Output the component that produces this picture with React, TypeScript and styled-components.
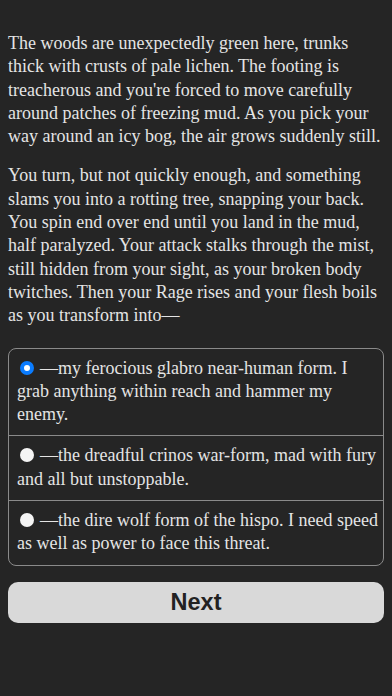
import { ReactElement, useState } from "react";
import styled, { createGlobalStyle } from "styled-components";

const GlobalStyle = createGlobalStyle`
  html, body {
    margin: 0;
    padding: 0;
    background: #252525;
  }
  body {
    font-family: "Liberation Serif", "DejaVu Serif", serif;
    -webkit-font-smoothing: antialiased;
  }
`;

const Screen = styled.div`
  width: 392px;
  min-height: 696px;
  box-sizing: border-box;
  padding: 32px 8px 0;
  background: #252525;
  color: #e4e4e4;
`;

const Passage = styled.p`
  margin: 0 0 16px;
  font-size: 18px;
  line-height: 23.3px;
`;

const Line = styled.span`
  white-space: nowrap;
`;

const Choices = styled.div`
  margin-top: 20px;
  border: 1px solid #8a8a8a;
  border-radius: 8px;
  overflow: hidden;
`;

const Choice = styled.label<{ $last?: boolean }>`
  display: block;
  padding: 8px 4px 9px 8px;
  font-size: 18px;
  line-height: 23.3px;
  border-bottom: ${(p) => (p.$last ? "none" : "1px solid #8a8a8a")};
  cursor: pointer;
`;

const Radio = styled.span<{ $checked: boolean }>`
  display: inline-block;
  width: 14px;
  height: 14px;
  margin: 0 6px 0 3px;
  border-radius: 50%;
  box-sizing: border-box;
  vertical-align: -1px;
  background: ${(p) => (p.$checked ? "#ffffff" : "#f4f4f4")};
  border: ${(p) => (p.$checked ? "4px solid #0a7cff" : "none")};
`;

const NextButton = styled.button`
  display: block;
  width: 100%;
  height: 41px;
  margin-top: 16px;
  border: none;
  border-radius: 10px;
  background: #d9d9d9;
  color: #222222;
  font-family: "Liberation Sans", Arial, sans-serif;
  font-weight: 700;
  font-size: 23.5px;
  cursor: pointer;
`;

// line breaks follow the original layout
const passages = [
  [
    "The woods are unexpectedly green here, trunks",
    "thick with crusts of pale lichen. The footing is",
    "treacherous and you're forced to move carefully",
    "around patches of freezing mud. As you pick your",
    "way around an icy bog, the air grows suddenly still.",
  ],
  [
    "You turn, but not quickly enough, and something",
    "slams you into a rotting tree, snapping your back.",
    "You spin end over end until you land in the mud,",
    "half paralyzed. Your attack stalks through the mist,",
    "still hidden from your sight, as your broken body",
    "twitches. Then your Rage rises and your flesh boils",
    "as you transform into—",
  ],
];

const options = [
  ["—my ferocious glabro near-human form. I", "grab anything within reach and hammer my", "enemy."],
  ["—the dreadful crinos war-form, mad with fury", "and all but unstoppable."],
  ["—the dire wolf form of the hispo. I need speed", "as well as power to face this threat."],
];

function Lines({ lines }: { lines: string[] }): ReactElement {
  return (
    <>
      {lines.map((line, i) => (
        <span key={i}>
          {i > 0 && <br />}
          <Line>{line}</Line>
        </span>
      ))}
    </>
  );
}

export default function App(): ReactElement {
  const [picked, setPicked] = useState(0);

  return (
    <Screen>
      <GlobalStyle />
      {passages.map((lines, i) => (
        <Passage key={i}>
          <Lines lines={lines} />
        </Passage>
      ))}
      <Choices>
        {options.map((lines, i) => (
          <Choice
            key={i}
            $last={i === options.length - 1}
            onClick={() => setPicked(i)}
          >
            <Radio $checked={picked === i} />
            <Lines lines={lines} />
          </Choice>
        ))}
      </Choices>
      <NextButton>Next</NextButton>
    </Screen>
  );
}
